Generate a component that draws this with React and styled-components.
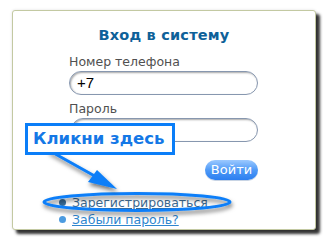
import React from "react";
import styled, { createGlobalStyle } from "styled-components";

const GlobalStyle = createGlobalStyle`
  html, body { margin: 0; padding: 0; background: #ffffff; }
  body { font-family: "DejaVu Sans", Verdana, sans-serif; }
`;

const Page = styled.div`
  position: relative;
  width: 330px;
  height: 242px;
  padding: 10px 0 0 12px;
  box-sizing: border-box;
  overflow: hidden;
`;

const Card = styled.div`
  width: 304px;
  height: 220px;
  box-sizing: border-box;
  border: 1px solid #c3c9a2;
  border-radius: 3px;
  background: #fff;
  box-shadow: 4px 4px 3px rgba(0, 0, 0, 0.8), 0 0 3px rgba(0, 0, 0, 0.12);
  padding: 15px 0 0 56px;
  display: flex;
  flex-direction: column;
`;

const Title = styled.h1`
  margin: 0 0 0 -56px;
  text-align: center;
  font-size: 14.5px;
  line-height: 18px;
  font-weight: bold;
  color: #0e6199;
  letter-spacing: 0.2px;
`;

const Form = styled.div`
  width: 189px;
  display: flex;
  flex-direction: column;
`;

const Label = styled.div`
  font-size: 12.5px;
  line-height: 16px;
  color: #505050;
  margin-top: ${(p) => p.$top}px;
  margin-bottom: 1px;
`;

const Input = styled.div`
  height: 24px;
  box-sizing: border-box;
  border: 1px solid #8797af;
  border-radius: 12px;
  box-shadow: inset 1px 1px 2px rgba(0, 0, 0, 0.35);
  padding: 0 7px;
  font-size: 15px;
  line-height: 22px;
  color: #000;
  font-family: "Liberation Sans", Arial, sans-serif;
  margin-left: ${(p) => p.$indent || 0}px;
`;

const ButtonRow = styled.div`
  display: flex;
  justify-content: flex-end;
  margin-top: 18px;
`;

const Button = styled.div`
  width: 53px;
  height: 20px;
  border-radius: 10px;
  background: linear-gradient(#9cc9ff, #4f9af7 50%, #2b7ef0);
  color: #fff;
  font-size: 13px;
  line-height: 20px;
  text-align: center;
  box-shadow: 0 1px 0 #c8d4e4;
`;

const Links = styled.ul`
  list-style: none;
  margin: 14px 0 0 -10px;
  padding: 0;
  display: flex;
  flex-direction: column;
`;

const LinkItem = styled.li`
  display: flex;
  align-items: center;
  gap: 6px;
  font-size: 12.5px;
  line-height: 17px;
`;

const Bullet = styled.span`
  width: 7px;
  height: 7px;
  border-radius: 50%;
  background: ${(p) => (p.$dark ? "#3a6f9c" : "#4c9be0")};
  flex: none;
`;

const Link = styled.a`
  color: ${(p) => (p.$dark ? "#3e6a90" : "#2e86cf")};
  text-decoration: underline;
`;

const Callout = styled.div`
  position: absolute;
  left: 25px;
  top: 123px;
  width: 150px;
  height: 32px;
  box-sizing: border-box;
  border: 3px solid #0a7ef8;
  background: #fff;
  color: #1478e6;
  font-weight: bold;
  font-size: 16.5px;
  line-height: 26px;
  padding-left: 5px;
  white-space: nowrap;
`;

const Overlay = styled.svg`
  position: absolute;
  left: 0;
  top: 0;
  pointer-events: none;
`;

export default function App() {
  return (
    <>
      <GlobalStyle />
      <Page>
        <Card>
          <Title>Вход в систему</Title>
          <Form>
            <Label $top={10}>Номер телефона</Label>
            <Input>+7</Input>
            <Label $top={6}>Пароль</Label>
            <Input $indent={2} />
            <ButtonRow>
              <Button>Войти</Button>
            </ButtonRow>
            <Links>
              <LinkItem>
                <Bullet $dark />
                <Link $dark href="#">Зарегистрироваться</Link>
              </LinkItem>
              <LinkItem>
                <Bullet />
                <Link href="#">Забыли пароль?</Link>
              </LinkItem>
            </Links>
          </Form>
        </Card>
        <Overlay width="330" height="242" viewBox="0 0 330 242">
          <defs>
            <filter id="sh" x="-20%" y="-50%" width="140%" height="200%">
              <feDropShadow dx="1" dy="3" stdDeviation="2" floodColor="#000" floodOpacity="0.55" />
            </filter>
          </defs>
          <ellipse cx="137" cy="202" rx="93" ry="8.5" fill="none" stroke="#0a7ef8" strokeWidth="3" filter="url(#sh)" />
          <g filter="url(#sh)">
            <line x1="50" y1="151" x2="100" y2="179" stroke="#0a7ef8" strokeWidth="3" strokeLinecap="round" />
            <polygon points="117,189 88,182 97,170" fill="#0a7ef8" />
          </g>
        </Overlay>
        <Callout>Кликни здесь</Callout>
      </Page>
    </>
  );
}
